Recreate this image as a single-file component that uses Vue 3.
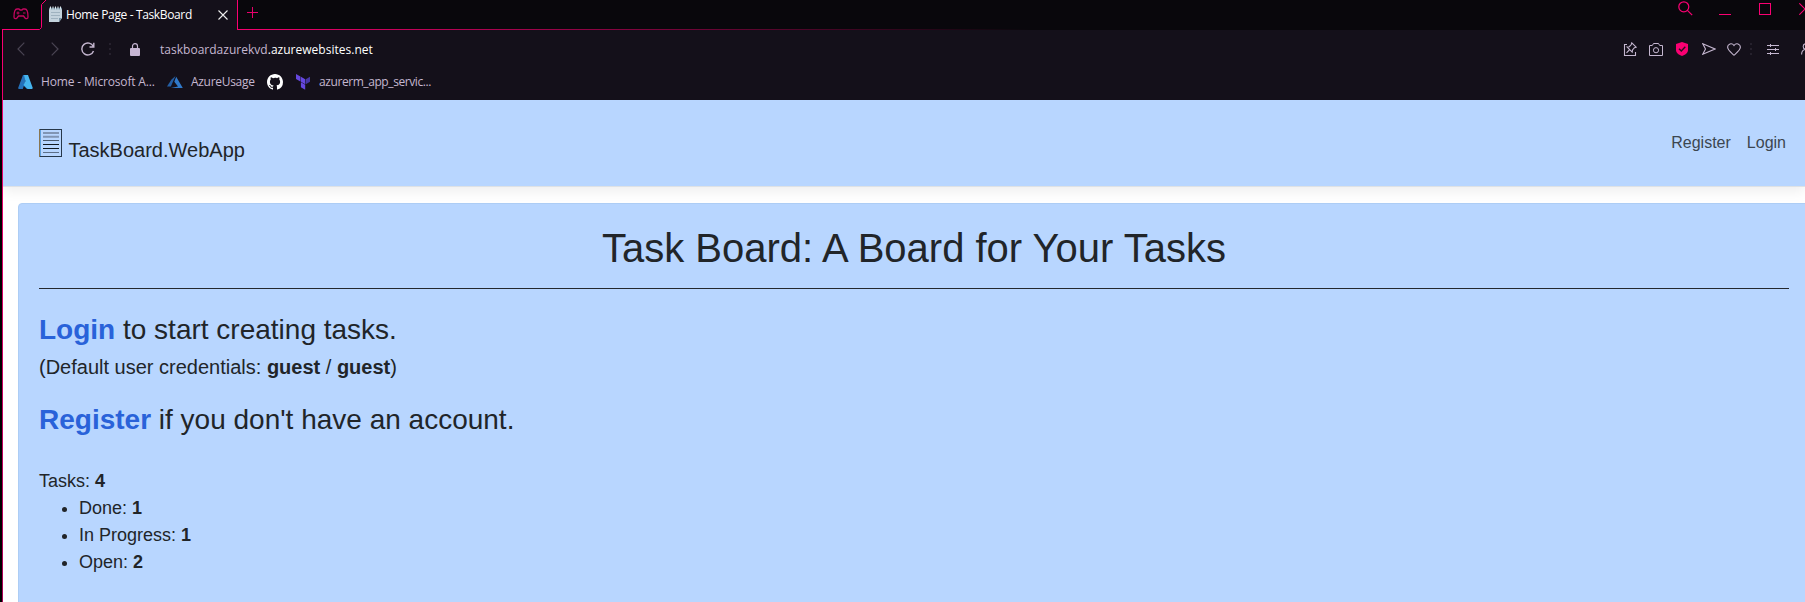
<script setup>
const tasks = [
  { label: 'Done', count: 1 },
  { label: 'In Progress', count: 1 },
  { label: 'Open', count: 2 },
]
</script>

<template>
  <div class="window">
    <header class="chrome">
      <svg class="outline" width="1805" height="602" viewBox="0 0 1805 602" fill="none">
        <defs>
          <linearGradient id="fade" gradientUnits="userSpaceOnUse" x1="237" y1="0" x2="1030" y2="0">
            <stop offset="0" stop-color="#f5006f" />
            <stop offset="1" stop-color="#f5006f" stop-opacity="0" />
          </linearGradient>
          <linearGradient id="fadeDown" gradientUnits="userSpaceOnUse" x1="0" y1="30" x2="0" y2="602">
            <stop offset="0" stop-color="#fa0072" />
            <stop offset="1" stop-color="#a80055" />
          </linearGradient>
        </defs>
        <path d="M41.5 27V4.5L46 0H237V30H3V29.5H39.5Z" fill="#14101a" />
        <path d="M2.5 29.5H39.5L41.5 27.5V4.5L46 0M237.5 0V29.5" stroke="#fa0072" />
        <rect x="237" y="29" width="793" height="1" fill="url(#fade)" />
        <rect x="2" y="29" width="1" height="573" fill="url(#fadeDown)" />
      </svg>

      <div class="tabs">
        <svg class="pad" width="16" height="12" viewBox="0 0 16 12" fill="none" stroke="#c4075f" stroke-width="1.3">
          <path d="M4 1H6L7 2H9L10 1H12C14 1 15 5 15 9C15 11 13 11 12 10L10.5 8H5.5L4 10C3 11 1 11 1 9C1 5 2 1 4 1Z" />
          <path d="M3.5 5H6.5M5 3.5V6.5M10 5H12.5" stroke-width="1" />
        </svg>
        <div class="tab">
          <svg width="15" height="17" viewBox="0 0 15 17">
            <path d="M1 2H14V12L11 16H1Z" fill="#c3d2dc" />
            <path d="M11 16V12H14Z" fill="#7893a5" />
            <path d="M1 2.5H14" stroke="#70899a" stroke-width="1.6" />
            <path d="M2.5 .5V3.5M5 .5V3.5M7.5 .5V3.5M10 .5V3.5M12.5 .5V3.5" stroke="#dce7ed" />
            <path d="M3 6.5H12M3 9.5H12M3 12.5H10" stroke="#9fb2bf" />
          </svg>
          <span class="tab-title">Home Page - TaskBoard</span>
          <svg class="tab-close" width="10" height="10" viewBox="0 0 10 10" stroke="#eee" stroke-width="1.1"><path d="M.5.5L9.5 9.5M9.5.5L.5 9.5" /></svg>
        </div>
        <svg class="plus" width="11" height="11" viewBox="0 0 11 11" stroke="#e8006b"><path d="M5.5 0V11M0 5.5H11" /></svg>
        <svg class="search" width="15" height="15" viewBox="0 0 15 15" fill="none" stroke="#fa0072" stroke-width="1.2"><circle cx="5.8" cy="5.8" r="5" /><path d="M9.4 9.4L14.2 14.2" /></svg>
        <svg class="minimise" width="12" height="1" viewBox="0 0 12 1"><rect width="12" height="1" fill="#fa0072" /></svg>
        <svg class="maximise" width="12" height="12" viewBox="0 0 12 12" fill="none" stroke="#fa0072"><rect x=".5" y=".5" width="11" height="11" /></svg>
        <svg class="close" width="6" height="12" viewBox="0 0 6 12" stroke="#fa0072" stroke-width="1.1"><path d="M.3.3L12 12M.3 11.7L12 0" /></svg>
      </div>

      <div class="toolbar">
        <svg class="back" width="8" height="14" viewBox="0 0 8 14" fill="none" stroke="#4a4453" stroke-width="1.2"><path d="M7.3.7L1 7L7.3 13.3" /></svg>
        <svg class="forward" width="8" height="14" viewBox="0 0 8 14" fill="none" stroke="#4a4453" stroke-width="1.2"><path d="M.7.7L7 7L.7 13.3" /></svg>
        <svg class="reload" width="14" height="14" viewBox="0 0 14 14" fill="none" stroke="#c5b7d0" stroke-width="1.4"><path d="M12.5 9A6 6 0 1 1 12.3 4.5M12.8.7V5H8.5" /></svg>
        <svg class="dots" width="2" height="12" viewBox="0 0 2 12" fill="#26212d"><path d="M0 0H2V2H0ZM0 5H2V7H0ZM0 10H2V12H0Z" /></svg>
        <svg class="lock" width="10" height="13" viewBox="0 0 10 13"><rect y="5" width="10" height="8" rx="1" fill="#c7b6d3" /><path d="M2.5 5.5V3A2.5 2.3 0 0 1 7.5 3V5.5" fill="none" stroke="#c7b6d3" stroke-width="1.2" /></svg>
        <span class="url">taskboardazurekvd<b>.azurewebsites.net</b></span>
        <svg class="pin" width="14" height="14" viewBox="0 0 14 14" fill="none" stroke="#c5b7d0" stroke-width="1.1"><path d="M4 2.5H1.5V13.5H12.5V10M3.5 10.8L6.3 8M8.8.8L13.2 5.2L11.4 5.7L9.5 8L9.2 10.2L4 5L6.3 4.7L8.3 2.5Z" /></svg>
        <svg class="camera" width="14" height="13" viewBox="0 0 14 13" fill="none" stroke="#c5b7d0"><path d="M.5 2.5H3.3L4.5.5H9.5L10.7 2.5H13.5V12.5H.5Z" /><circle cx="7" cy="7.2" r="2.6" /></svg>
        <svg class="shield" width="12" height="14" viewBox="0 0 12 14"><path d="M6 0L12 2V8C12 11 9 13 6 14C3 13 0 11 0 8V2Z" fill="#fa0072" /><path d="M3 6.7L5.3 9L9.3 4.8" fill="none" stroke="#28101e" stroke-width="1.4" /></svg>
        <svg class="send" width="14" height="12" viewBox="0 0 14 12" fill="none" stroke="#c5b7d0" stroke-width="1.1"><path d="M.8.8L13 6L.8 11.2L3.5 6Z" /></svg>
        <svg class="heart" width="14" height="13" viewBox="0 0 14 13" fill="none" stroke="#c5b7d0" stroke-width="1.1"><path d="M7 12.2C4 9.6.6 7.3.6 4.1C.6 1.2 4.7-.8 7 2.5C9.3-.8 13.4 1.2 13.4 4.1C13.4 7.3 10 9.6 7 12.2Z" /></svg>
        <svg class="dots dots-right" width="2" height="12" viewBox="0 0 2 12" fill="#26212d"><path d="M0 0H2V2H0ZM0 5H2V7H0ZM0 10H2V12H0Z" /></svg>
        <svg class="sliders" width="12" height="11" viewBox="0 0 12 11" stroke="#c5b7d0"><path d="M0 1.5H12M0 5.5H12M0 9.5H12M3.5 0V3M8.5 4V7M3.5 8V11" /></svg>
        <svg class="person" width="4" height="12" viewBox="0 0 4 12" fill="none" stroke="#c5b7d0" stroke-width="1.1"><circle cx="5" cy="3.5" r="2.8" /><path d="M.6 11.5C.6 8.8 2 7 4 6.5" /></svg>
      </div>

      <div class="bookmarks">
        <svg class="azure" width="15" height="14" viewBox="0 0 15 14">
          <path d="M5 0H9.5L4.8 14H1C.2 14 0 13.3.3 12.6Z" fill="#2470b8" />
          <path d="M4 9H11L9 14Z" fill="#1671c9" />
          <path d="M6 0H10L14.7 12.8C14.9 13.5 14.5 14 13.8 14H9.5L5.5 10L7.5 6Z" fill="#45b4ee" />
        </svg>
        <span class="bm-home">Home - Microsoft A...</span>
        <svg class="azure-old" width="16" height="12" viewBox="0 0 16 12"><path d="M8.5 0L3.8 10.5H0L4.3 3.8Z" fill="#245fa5" /><path d="M9.2.8L15.8 12H3.8L11 10.5L7.3 5.7Z" fill="#3079c9" /></svg>
        <span class="bm-usage">AzureUsage</span>
        <svg class="github" width="16" height="16" viewBox="0 0 16 16" fill="#fff"><path d="M8 0C3.58 0 0 3.58 0 8c0 3.54 2.29 6.53 5.47 7.59.4.07.55-.17.55-.38 0-.19-.01-.82-.01-1.49-2.01.37-2.53-.49-2.69-.94-.09-.23-.48-.94-.82-1.13-.28-.15-.68-.52-.01-.53.63-.01 1.08.58 1.23.82.72 1.21 1.87.87 2.33.66.07-.52.28-.87.51-1.07-1.78-.2-3.64-.89-3.64-3.95 0-.87.31-1.59.82-2.15-.08-.2-.36-1.02.08-2.12 0 0 .67-.21 2.2.82A7.6 7.6 0 0 1 8 3.86c.68 0 1.36.09 2 .27 1.53-1.04 2.2-.82 2.2-.82.44 1.1.16 1.92.08 2.12.51.56.82 1.27.82 2.15 0 3.07-1.87 3.75-3.65 3.95.29.25.54.73.54 1.48 0 1.07-.01 1.93-.01 2.2 0 .21.15.46.55.38A8 8 0 0 0 16 8c0-4.42-3.58-8-8-8Z" /></svg>
        <svg class="terraform" width="14" height="16" viewBox="0 0 14 16"><path d="M0 0L4.4 2.6V7.5L0 5ZM4.9 2.8L9.2 5.3V10.2L4.9 7.7ZM4.9 8.3L9.2 10.8V15.8L4.9 13.2Z" fill="#6547df" /><path d="M9.7 5.3L14 2.8V7.7L9.7 10.2Z" fill="#4636a5" /></svg>
        <span class="bm-app">azurerm_app_servic...</span>
      </div>
    </header>

    <div class="page">
      <nav class="navbar">
        <a class="brand">
          <svg width="24" height="29" viewBox="0 0 24 29" fill="none">
            <rect x=".5" y=".5" width="22" height="27" stroke="#27384a" />
            <path d="M.5 0V28" stroke="#8a7650" /><path d="M1.5 1V27" stroke="#5ea0dc" />
            <path d="M4 4H20M4 7.8H20" stroke="#8095b4" stroke-width="2" />
            <path d="M4 11.5H20" stroke="#49586d" /><path d="M4 15.5H20M4 19.5H20" stroke="#101820" /><path d="M4 23.5H20" stroke="#5c6f88" />
          </svg>
          <span>TaskBoard.WebApp</span>
        </a>
        <div class="links"><a>Register</a><a>Login</a></div>
      </nav>
      <main class="board">
        <h1>Task Board: A Board for Your Tasks</h1>
        <hr />
        <p class="lead"><a>Login</a> to start creating tasks.</p>
        <p class="credentials">(Default user credentials: <b>guest</b> / <b>guest</b>)</p>
        <p class="lead second"><a>Register</a> if you don't have an account.</p>
        <div class="stats">
          Tasks: <b>4</b>
          <ul>
            <li v-for="t in tasks" :key="t.label">{{ t.label }}: <b>{{ t.count }}</b></li>
          </ul>
        </div>
      </main>
    </div>
  </div>
</template>

<style>
body { overflow: hidden; background: #000; }
</style>

<style scoped>
.window { position: relative; width: 1805px; height: 602px; overflow: hidden; background: #000; }
.window svg { display: block; flex: none; }
.chrome { height: 100px; background: linear-gradient(90deg, #000 3px, #14101a 3px); font: 12px/16px "Open Sans", "Noto Sans", sans-serif; color: #c5b7d0; white-space: nowrap; }
.outline { position: absolute; left: 0; top: 0; pointer-events: none; }
.tabs { display: flex; align-items: flex-start; height: 30px; background: #09070c; }
.tabs > *, .toolbar > *, .bookmarks > * { position: relative; flex: none; }
.pad { margin: 8px 0 0 13px; }
.tab { display: flex; width: 189px; margin: 6px 0 0 19px; color: #fff; }
.tab-title { width: 140px; margin: 1px 0 0 3px; letter-spacing: -0.36px; }
.tab-close { margin: 4px 0 0 12px; }
.plus { margin: 7px 0 0 10px; }
.search { margin: 1px 0 0 auto; }
.minimise { margin: 14px 0 0 26px; }
.maximise { margin: 3px 0 0 28px; }
.close { margin: 3px 0 0 28px; }
.toolbar { display: flex; align-items: center; height: 38px; margin-left: 3px; background: #14101a; }
.back { margin-left: 14px; }
.forward { margin-left: 26px; }
.reload { margin-left: 22px; }
.dots { margin-left: 14px; }
.lock { margin-left: 19px; }
.url { margin-left: 20px; padding-top: 2px; letter-spacing: 0.02px; }
.url b { font-weight: 400; color: #fff; }
.pin { margin-left: auto; }
.camera { margin-left: 12px; }
.shield { margin-left: 13px; }
.send { margin-left: 14px; }
.heart { margin-left: 11px; }
.dots-right { margin-left: 9px; }
.sliders { margin-left: 15px; }
.person { margin-left: 22px; }
.bookmarks { display: flex; align-items: center; height: 28px; padding: 0 0 4px 15px; margin-left: 3px; background: #14101a; font-size: 12px; }
.bm-home { width: 118px; margin-left: 8px; letter-spacing: -0.16px; }
.azure-old { margin-left: 8px; }
.bm-usage { width: 68px; margin-left: 8px; letter-spacing: -0.3px; }
.github { margin-left: 8px; }
.terraform { margin-left: 13px; }
.bm-app { margin-left: 9px; letter-spacing: -0.42px; }

.page { height: 502px; margin-left: 3px; background: #fff; overflow: hidden; color: #212529; font-family: "Liberation Sans", Arial, sans-serif; }
.navbar { display: flex; justify-content: space-between; box-sizing: content-box; width: 1747px; height: 86px; padding: 0 19px 0 36px; background: #b8d6ff; border-bottom: 1px solid #dee2e6; box-shadow: 0 4px 12px rgba(0, 0, 0, .07); }
.brand { display: flex; gap: 5.5px; font-size: 20px; line-height: 30px; }
.brand svg { margin-top: 29px; }
.brand span { margin-top: 35px; }
.links { display: flex; gap: 16px; padding-top: 31px; font-size: 16px; line-height: 24px; color: #3c4650; }
.board { box-sizing: content-box; width: 1750px; height: 420px; margin: 16px 0 0 15px; padding: 20px 22px 0 20px; border: 1px solid #adcdf5; border-radius: 4px; background: #b8d6ff; }
h1 { margin: 0; font-size: 40px; line-height: 48px; font-weight: 400; text-align: center; }
hr { height: 1px; margin: 16px 0 0; border: 0; background: #24282e; }
p { margin: 0; }
.lead { margin-top: 24px; font-size: 28px; line-height: 34px; }
.lead a { color: #2962d9; font-weight: 700; }
.credentials { margin-top: 5px; font-size: 20px; line-height: 30px; }
.second { margin-top: 21px; }
.stats { margin-top: 31px; font-size: 18px; line-height: 27px; }
ul { margin: 0; padding-left: 40px; }
</style>
